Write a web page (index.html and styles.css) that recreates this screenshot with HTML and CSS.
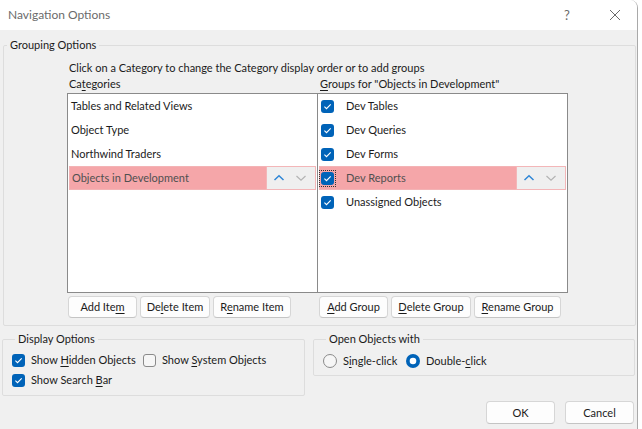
FILE: index.html
```html
<!DOCTYPE html>
<html>
<head>
<meta charset="utf-8">
<link rel="stylesheet" href="styles.css">
</head>
<body>
<div class="dialog">
  <header class="titlebar">
    <span class="title">Navigation Options</span>
    <span class="help">?</span>
    <span class="close"><svg width="12" height="12" viewBox="0 0 12 12"><path d="M1 1L11 11M11 1L1 11" stroke="#6b6b6b" stroke-width="1" fill="none"/></svg></span>
  </header>
  <main class="body">
    <fieldset class="group grouping">
      <legend>Grouping Options</legend>
      <div class="grouping-inner">
        <p class="hint">Click on a Category to change the Category display order or to add groups</p>
        <div class="panes">
          <section class="pane pane-left">
            <div class="label">Ca<u>t</u>egories</div>
            <div class="list list-left">
              <div class="row">Tables and Related Views</div>
              <div class="row">Object Type</div>
              <div class="row">Northwind Traders</div>
              <div class="row selected">
                <span class="row-text">Objects in Development</span>
                <span class="mover">
                  <svg width="12" height="8" viewBox="0 0 12 8"><path d="M1.5 6L6 1.8L10.5 6" stroke="#2f86d6" stroke-width="1.5" fill="none"/></svg>
                  <svg width="12" height="8" viewBox="0 0 12 8"><path d="M1.5 2L6 6.2L10.5 2" stroke="#b3b3b3" stroke-width="1.2" fill="none"/></svg>
                </span>
              </div>
            </div>
            <div class="buttons">
              <button class="btn w-add-item">Add Ite<u>m</u></button>
              <button class="btn w-del-item">De<u>l</u>ete Item</button>
              <button class="btn w-ren-item">R<u>e</u>name Item</button>
            </div>
          </section>
          <section class="pane pane-right">
            <div class="label label-right"><u>G</u>roups for "Objects in Development"</div>
            <div class="list list-right">
              <div class="row check-row">
                <svg class="cb" width="13" height="13" viewBox="0 0 13 13"><rect x="0" y="0" width="13" height="13" rx="3" fill="#0063b8"/><path d="M3.4 6.7L5.5 8.7L9.7 4.3" stroke="#fff" stroke-width="1.1" fill="none"/></svg>
                <span class="row-text">Dev Tables</span>
              </div>
              <div class="row check-row">
                <svg class="cb" width="13" height="13" viewBox="0 0 13 13"><rect x="0" y="0" width="13" height="13" rx="3" fill="#0063b8"/><path d="M3.4 6.7L5.5 8.7L9.7 4.3" stroke="#fff" stroke-width="1.1" fill="none"/></svg>
                <span class="row-text">Dev Queries</span>
              </div>
              <div class="row check-row">
                <svg class="cb" width="13" height="13" viewBox="0 0 13 13"><rect x="0" y="0" width="13" height="13" rx="3" fill="#0063b8"/><path d="M3.4 6.7L5.5 8.7L9.7 4.3" stroke="#fff" stroke-width="1.1" fill="none"/></svg>
                <span class="row-text">Dev Forms</span>
              </div>
              <div class="row check-row selected">
                <span class="focus"><svg class="cb" width="13" height="13" viewBox="0 0 13 13"><rect x="0" y="0" width="13" height="13" rx="3" fill="#0063b8"/><path d="M3.4 6.7L5.5 8.7L9.7 4.3" stroke="#fff" stroke-width="1.1" fill="none"/></svg></span>
                <span class="row-text">Dev Reports</span>
                <span class="mover">
                  <svg width="12" height="8" viewBox="0 0 12 8"><path d="M1.5 6L6 1.8L10.5 6" stroke="#2f86d6" stroke-width="1.5" fill="none"/></svg>
                  <svg width="12" height="8" viewBox="0 0 12 8"><path d="M1.5 2L6 6.2L10.5 2" stroke="#b3b3b3" stroke-width="1.2" fill="none"/></svg>
                </span>
              </div>
              <div class="row check-row">
                <svg class="cb" width="13" height="13" viewBox="0 0 13 13"><rect x="0" y="0" width="13" height="13" rx="3" fill="#0063b8"/><path d="M3.4 6.7L5.5 8.7L9.7 4.3" stroke="#fff" stroke-width="1.1" fill="none"/></svg>
                <span class="row-text">Unassigned Objects</span>
              </div>
            </div>
            <div class="buttons buttons-right">
              <button class="btn w-add-group"><u>A</u>dd Group</button>
              <button class="btn w-del-group"><u>D</u>elete Group</button>
              <button class="btn w-ren-group"><u>R</u>ename Group</button>
            </div>
          </section>
        </div>
      </div>
    </fieldset>

    <div class="lower">
      <fieldset class="group display">
        <legend>Display Options</legend>
        <div class="opt-row">
          <label class="opt opt-first">
            <svg class="cb" width="13" height="13" viewBox="0 0 13 13"><rect x="0" y="0" width="13" height="13" rx="3" fill="#0063b8"/><path d="M3.4 6.7L5.5 8.7L9.7 4.3" stroke="#fff" stroke-width="1.1" fill="none"/></svg>
            <span>Show <u>H</u>idden Objects</span>
          </label>
          <label class="opt">
            <svg class="cb" width="13" height="13" viewBox="0 0 13 13"><rect x="0.5" y="0.5" width="12" height="12" rx="2.5" fill="#f6f6f6" stroke="#8a8a8a"/></svg>
            <span>Show <u>S</u>ystem Objects</span>
          </label>
        </div>
        <div class="opt-row">
          <label class="opt">
            <svg class="cb" width="13" height="13" viewBox="0 0 13 13"><rect x="0" y="0" width="13" height="13" rx="3" fill="#0063b8"/><path d="M3.4 6.7L5.5 8.7L9.7 4.3" stroke="#fff" stroke-width="1.1" fill="none"/></svg>
            <span>Show Search <u>B</u>ar</span>
          </label>
        </div>
      </fieldset>
      <fieldset class="group open">
        <legend>Open Objects with</legend>
        <div class="opt-row radio-row">
          <label class="opt radio-first">
            <svg class="rb" width="14" height="14" viewBox="0 0 14 14"><circle cx="7" cy="7" r="6.5" fill="#f6f6f6" stroke="#8a8a8a"/></svg>
            <span>S<u>i</u>ngle-click</span>
          </label>
          <label class="opt">
            <svg class="rb" width="14" height="14" viewBox="0 0 14 14"><circle cx="7" cy="7" r="7" fill="#0063b8"/><circle cx="7" cy="7" r="3.3" fill="#fff"/></svg>
            <span>Double-<u>c</u>lick</span>
          </label>
        </div>
      </fieldset>
    </div>

    <div class="footer">
      <button class="btn btn-foot">OK</button>
      <button class="btn btn-foot">Cancel</button>
    </div>
  </main>
</div>
</body>
</html>
```

FILE: styles.css
```css
* { box-sizing: border-box; }
html, body { margin: 0; padding: 0; }
body {
  background: #ffffff;
  font-family: Lato, "Noto Sans", sans-serif;
  font-size: 11px;
  line-height: 16px;
  color: #1b1b1b;
  width: 642px;
  height: 429px;
  overflow: hidden;
}
u { text-decoration: underline; text-underline-offset: 2px; text-decoration-thickness: 1px; }

.dialog {
  width: 638px;
  height: 429px;
  border-right: 1px solid #a9a9a9;
  border-top-right-radius: 8px;
  overflow: hidden;
  display: flex;
  flex-direction: column;
}
.titlebar {
  height: 30px;
  flex: none;
  background: #ffffff;
  display: flex;
  align-items: center;
  padding-left: 8px;
  color: #6b6b6b;
}
.title { flex: 1; font-size: 12px; }
.help { width: 12px; margin-right: 33px; color: #6b6b6b; font-size: 13px; }
.close { width: 12px; height: 12px; margin-right: 16px; display: flex; }

.body {
  flex: 1;
  background: #f0f0f0;
  padding: 0 2px 0 3px;
}

.group {
  margin: 0;
  padding: 0;
  border: 1px solid #dddddd;
  border-radius: 2px;
  min-width: 0;
}
.group legend {
  padding: 0 3px;
  margin-left: 3px;
  line-height: 16px;
  color: #1b1b1b;
}

.grouping {
  width: 633px;
  margin-top: 7px;
}
.grouping-inner {
  padding: 7px 0 7px 63px;
}
.hint { margin: 0 0 0 2px; }

.panes { display: flex; }
.pane { display: flex; flex-direction: column; }
.label { margin: 0 0 1px 2px; height: 16px; }

.list {
  height: 200px;
  background: #ffffff;
  border: 1px solid #8a8a8a;
  padding-top: 0;
}
.list-left { width: 251px; }
.list-right { width: 250px; border-left: none; }

.row {
  height: 24px;
  display: flex;
  align-items: center;
  padding-left: 3px;
  margin: 0 1px 0 0;
  white-space: nowrap;
}
.list-left .row { margin-left: 0; }
.check-row { padding-left: 2px; margin-left: 1px; }
.check-row .cb { margin-right: 12px; flex: none; }
.row.selected {
  background: #f5a6a9;
  color: #505050;
  margin-left: 1px;
  padding-left: 2px;
  border: 1px solid #f3b3b5;
}
.check-row.selected { padding-left: 1px; }
.row-text { flex: 1; }
.mover {
  width: 50px;
  height: 24px;
  margin: -1px -1px -1px 0;
  background: #efefef;
  border: 1px solid #f3b6b8;
  display: flex;
  align-items: center;
  justify-content: space-around;
  padding: 0 3px 0 1px;
}
.focus {
  display: flex;
  outline: 1px dotted #333;
  outline-offset: 1px;
  margin-right: 12px;
}
.focus .cb { margin-right: 0; }

.buttons {
  display: flex;
  gap: 3px;
  margin-top: 3px;
  padding-left: 1px;
}
.buttons-right { padding-left: 1px; }
.btn {
  height: 22px;
  font: inherit;
  color: #1b1b1b;
  background: #fdfdfd;
  border: 1px solid #d6d6d6;
  border-bottom-color: #c4c4c4;
  border-radius: 4px;
  padding: 0;
  text-align: center;
}
.w-add-item { width: 69px; }
.w-del-item { width: 70px; }
.w-ren-item { width: 78px; }
.w-add-group { width: 69px; }
.w-del-group { width: 80px; }
.w-ren-group { width: 87px; }

.lower {
  display: flex;
  gap: 8px;
  margin-top: 5px;
  align-items: flex-start;
}
.display { width: 303px; margin-left: -1px; padding: 3px 9px 5px 9px; }
.open { width: 322px; padding: 4px 9px 4px 9px; }
.opt-row { display: flex; height: 20px; align-items: center; }
.opt { display: flex; align-items: center; white-space: nowrap; }
.opt .cb { margin-right: 6px; flex: none; }
.opt .rb { margin-right: 6px; flex: none; }
.opt-first { width: 131px; }
.radio-first { width: 83px; }

.footer {
  display: flex;
  justify-content: flex-end;
  gap: 10px;
  margin-top: 5px;
  padding-right: 1px;
}
.btn-foot { width: 69px; height: 23px; }
```
